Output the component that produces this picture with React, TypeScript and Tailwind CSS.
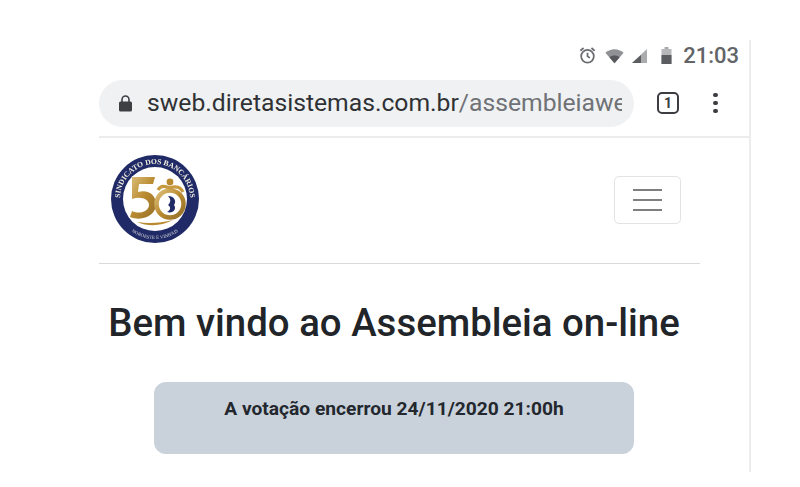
function Logo() {
  return (
    <svg width="88" height="88" viewBox="0 0 88 88" className="block blur-[0.3px]">
      <defs>
        <linearGradient id="gold" x1="0" y1="0" x2="1" y2="1">
          <stop offset="0" stopColor="#dcc07c" />
          <stop offset="0.5" stopColor="#b98a2f" />
          <stop offset="1" stopColor="#94702a" />
        </linearGradient>
        <path id="topArc" d="M9 44 A35 35 0 0 1 79 44" />
        <path id="botArc" d="M16 72.6 A40 40 0 0 0 72 72.6" />
      </defs>
      <circle cx="44" cy="44" r="44" fill="#1f2a66" />
      <circle cx="44" cy="44" r="32" fill="#ffffff" />
      <text fontFamily="Liberation Serif, serif" fontSize="7.6" fill="#f1eee2" fontWeight="700">
        <textPath href="#topArc" startOffset="50%" textAnchor="middle">SINDICATO DOS BANCÁRIOS</textPath>
      </text>
      <text fontFamily="Liberation Serif, serif" fontSize="4.8" fill="#dfdde0">
        <textPath href="#botArc" startOffset="50%" textAnchor="middle">NOROESTE E VINHAIS</textPath>
      </text>
      <path d="M21 22 H44 L42 29 H28 L27 37 C37 34 45 40 45 49 C45 60 32 67 19 62 L21 56 C29 60 38 56 38 50 C38 44 30 41 21 44 Z" fill="url(#gold)" />
      <circle cx="59" cy="49" r="13.5" fill="none" stroke="url(#gold)" strokeWidth="4.5" />
      <circle cx="59" cy="27" r="3.4" fill="#b98a2f" />
      <path d="M47 35 C50 30 54 31 59 33 C64 31 69 31 72 37" fill="none" stroke="#c79a3f" strokeWidth="3.2" />
      <path d="M57 41 C63 41 66 46 63 50 C66 54 62 59 56 57 C60 55 60 52 57 50 C60 47 60 44 57 41 Z" fill="#1f2a66" />
      <path d="M26 67 C38 72 50 71 62 65 C50 68 38 69 26 67 Z" fill="#b98a2f" />
    </svg>
  );
}

function Status() {
  return (
    <div className="flex items-center justify-end h-[39px] pr-[10px] pb-[8px] gap-[8px] text-[#6b6d70]">
      <svg width="19" height="19" viewBox="0 0 24 24" fill="none" stroke="#6a6c6f" strokeWidth="2.2">
        <circle cx="12" cy="13" r="8" />
        <path d="M12 8.5V13l3 2M3 6l4-3.5M21 6l-4-3.5" />
      </svg>
      <svg width="19" height="16" viewBox="0 0 24 20">
        <path d="M12 19 L0.5 6 C7 0 17 0 23.5 6 Z" fill="#8f9194" />
        <path d="M12 19 L5.5 11.5 C9 8.5 15 8.5 18.5 11.5 Z" fill="#56585b" />
      </svg>
      <svg width="15" height="14" viewBox="0 0 15 14" className="mr-[6px]">
        <path d="M0 14 L15 0 V14 Z" fill="#a9abad" />
        <path d="M0 14 L9 6 V14 Z" fill="#5b5d60" />
      </svg>
      <svg width="11" height="17" viewBox="0 0 11 17" className="mr-[3px]">
        <rect x="3.5" y="0" width="4" height="3" fill="#a9abad" />
        <rect x="0.5" y="2" width="10" height="15" fill="#b5b7b9" />
        <rect x="0.5" y="8" width="10" height="9" fill="#5b5d60" />
      </svg>
      <span className="font-['Roboto',sans-serif] font-medium text-[22px] leading-none text-[#626467]">21:03</span>
    </div>
  );
}

function AddressBar() {
  return (
    <div className="flex items-center h-[57px] pb-[9px]">
      <div className="flex items-center w-[535px] h-[47px] rounded-full bg-[#f0f1f3] pl-[19px] pr-[12px] overflow-hidden">
        <svg width="15" height="17" viewBox="0 0 15 17" className="shrink-0">
          <path d="M4 7V4.5a3.5 3.5 0 0 1 7 0V7" fill="none" stroke="#3d3f43" strokeWidth="1.6" />
          <rect x="1" y="6.5" width="13" height="10" rx="1.5" fill="#3d3f43" />
        </svg>
        <span className="ml-[14px] whitespace-nowrap font-['Roboto',sans-serif] text-[24.7px] leading-none text-[#2f3135] overflow-hidden">
          sweb.diretasistemas.com.br<span className="text-[#6f7276]">/assembleiawe</span>
        </span>
      </div>
      <div className="ml-[23px] w-[22px] h-[22px] rounded-[5px] border-[2px] border-[#3b3d41] flex items-center justify-center font-['Roboto',sans-serif] font-bold text-[14px] leading-none text-[#3b3d41]">
        1
      </div>
      <div className="ml-[34px] flex flex-col gap-[3.5px]">
        <span className="w-[4.5px] h-[4.5px] rounded-full bg-[#3b3d41]" />
        <span className="w-[4.5px] h-[4.5px] rounded-full bg-[#3b3d41]" />
        <span className="w-[4.5px] h-[4.5px] rounded-full bg-[#3b3d41]" />
      </div>
    </div>
  );
}

export default function App() {
  return (
    <div className="w-[800px] h-[487px] bg-white overflow-hidden pl-[99px] pt-[40px] font-['Roboto',sans-serif]">
      <div className="w-[652px] h-[432px] border-r-[2px] border-[#ececec]">
        <Status />
        <AddressBar />
        <div className="h-[2px] bg-[#ececec]" />
        <div className="w-[601px]">
          <div className="flex items-center justify-between h-[126px] pl-[12px] pr-[19px] border-b border-[#d9d9d9]">
            <div className="-mt-[3px]"><Logo /></div>
            <div className="w-[67px] h-[48px] -mt-[2px] rounded-[5px] border border-[#e3e3e3] flex flex-col items-center justify-center gap-[8px]">
              <span className="w-[29px] h-[2px] bg-[#7f7f7f]" />
              <span className="w-[29px] h-[2px] bg-[#7f7f7f]" />
              <span className="w-[29px] h-[2px] bg-[#7f7f7f]" />
            </div>
          </div>
          <h1 className="mt-[36px] pr-[11px] text-center font-medium text-[38.4px] leading-[46px] text-[#212529] whitespace-nowrap">
            Bem vindo ao Assembleia on-line
          </h1>
          <div className="mt-[36px] ml-[55px] w-[480px] h-[72px] rounded-[12px] bg-[#c9d2da] pt-[16px] text-center font-bold text-[19.2px] leading-[22px] text-[#23272e]">
            A votação encerrou 24/11/2020 21:00h
          </div>
        </div>
      </div>
    </div>
  );
}
